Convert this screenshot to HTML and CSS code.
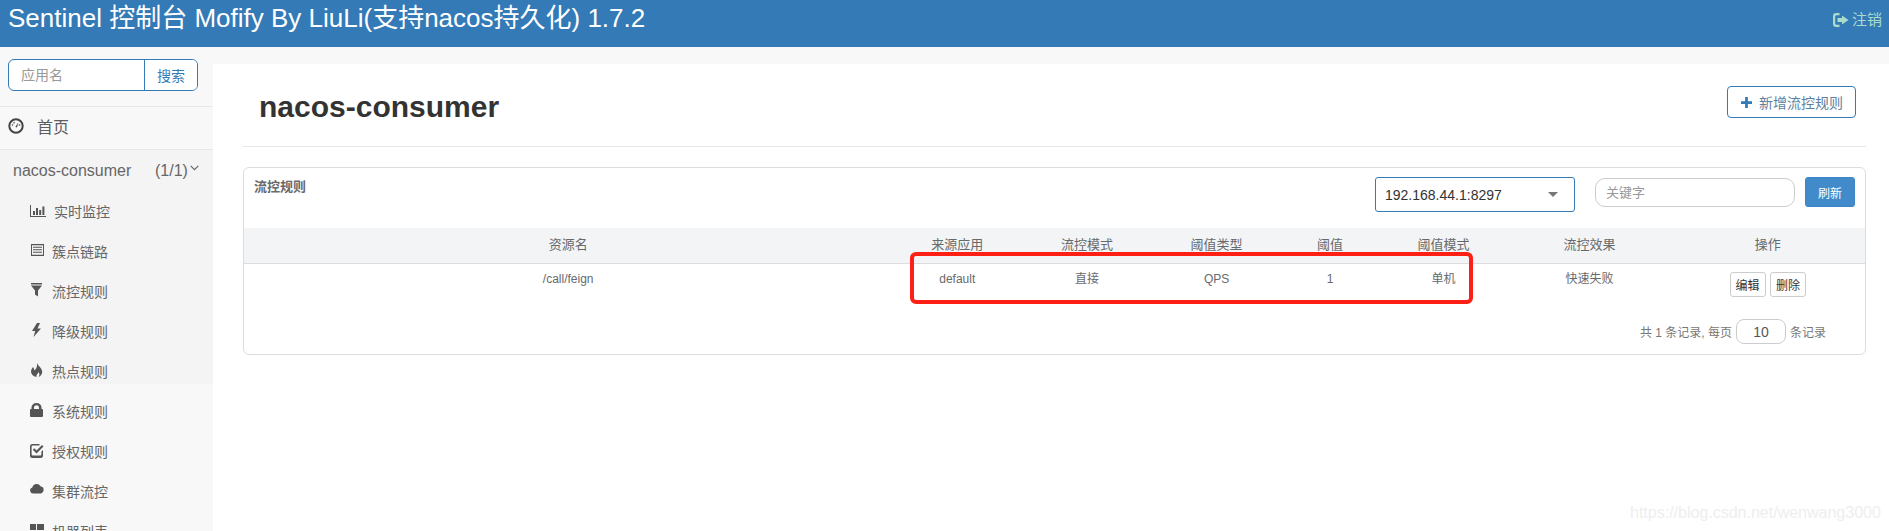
FILE: index.html
```html
<!DOCTYPE html>
<html lang="en">

<head>
    <meta charset="UTF-8">
    <meta name="viewport" content="width=device-width, initial-scale=1.0">
    <title>Sentinel 控制台</title>
    <link rel="stylesheet" href="styles.css">
</head>

<body>
    <header class="navbar">
        <div class="brand">Sentinel 控制台 Mofify By LiuLi(支持nacos持久化) 1.7.2</div>
        <a class="logout" href="#">
            <svg class="logout-icon" viewBox="0 0 16 14"><path d="M6.500 0H3.200A3.200 3.200 0 0 0 0 3.200v7.600A3.200 3.200 0 0 0 3.200 14H6.500v-2.200H3.600A1.400 1.400 0 0 1 2.200 10.400V3.600A1.400 1.400 0 0 1 3.600 2.200H6.500zM9 2.500V5H4.500V9H9V11.500L15.500 7z"/></svg>
            注销
        </a>
    </header>

    <div class="layout">
        <aside class="sidebar">
            <div class="search-box">
                <div class="search-group">
                    <input class="search-input" type="text" placeholder="应用名">
                    <button class="search-btn">搜索</button>
                </div>
            </div>
            <a class="home-link" href="#">
                <svg class="home-icon" viewBox="0 0 16 16"><circle cx="8" cy="8" r="6.700" fill="none" stroke="currentColor" stroke-width="2"/><path d="M7.400 8.800 10.400 4.400 8.900 9.500z"/><circle cx="4.600" cy="7" r=".8"/><circle cx="6" cy="4.700" r=".8"/><circle cx="11.500" cy="7" r=".8"/></svg>
                <span>首页</span>
            </a>
            <div class="app-block">
                <div class="app-title">
                    <span class="app-name">nacos-consumer</span>
                    <span class="app-count">(1/1)</span>
                    <svg class="chevron" viewBox="0 0 9 6"><path d="M.7.8 4.500 4.600 8.300.8" fill="none" stroke="currentColor" stroke-width="1.200"/></svg>
                </div>
                <ul class="sub-menu">
                    <li>
                        <svg class="menu-icon menu-icon-wide" viewBox="0 0 16 16"><path d="M0 2h1v11h15v1H0zM3 8h2v4H3zM6 5h2v7H6zM9.200 7h2v5h-2zM12.400 3.500h2V12h-2z"/></svg>
                        <span>实时监控</span>
                    </li>
                    <li>
                        <svg class="menu-icon" viewBox="0 0 16 16"><path fill-rule="evenodd" d="M1 1h13v12H1zM2 2.200v9.600h11V2.200z"/><path d="M3 3.800h9v1H3zM3 6.300h9v1H3zM3 8.800h9v1H3z"/></svg>
                        <span>簇点链路</span>
                    </li>
                    <li>
                        <svg class="menu-icon" viewBox="0 0 16 16"><path d="M1 0h11v1.500H1zM1 2.500h11L8 7.500v6l-3-2v-4z"/></svg>
                        <span>流控规则</span>
                    </li>
                    <li>
                        <svg class="menu-icon" viewBox="0 0 16 16"><path d="M7 0 2 8h3.200L3.500 14 11 5.500H7.500L10 0z"/></svg>
                        <span>降级规则</span>
                    </li>
                    <li>
                        <svg class="menu-icon" viewBox="0 0 16 16"><path d="M7 0c.8 2.500 4 4 5 7.500.8 3-1 5.500-3.500 6.500 1.200-1.500 1.300-3.500 0-5C8 11 6 11.500 6.500 14 3 13.200 1 11 1 8.500 1 6.500 2.200 5.500 3 4c1 1.500 1.300 2.500 1.500 3.500C6.500 5.500 7.500 3 7 0z"/></svg>
                        <span>热点规则</span>
                    </li>
                    <li>
                        <svg class="menu-icon" viewBox="0 0 16 16"><path fill-rule="evenodd" d="M1.500 6V4.500a5 4.500 0 0 1 10 0V6h.5a1 1 0 0 1 1 1v6a1 1 0 0 1-1 1H1a1 1 0 0 1-1-1V7a1 1 0 0 1 1-1zM4 6h5V4.500a2.500 2.300 0 0 0-5 0z"/></svg>
                        <span>系统规则</span>
                    </li>
                    <li>
                        <svg class="menu-icon" viewBox="0 0 16 16"><path d="M2.500 1h7v1.600H2.800a1.200 1.200 0 0 0-1.200 1.200v7.400a1.200 1.200 0 0 0 1.200 1.200h7.400a1.200 1.200 0 0 0 1.200-1.200V8.500L13 6.900v5.600a2.500 2.500 0 0 1-2.500 2.500h-8A2.500 2.500 0 0 1 0 12.500v-9A2.500 2.500 0 0 1 2.500 1z"/><path d="M6.500 10.500 2.800 6.800 4.300 5.300 6.500 7.500 12 2l1.500 1.500z"/></svg>
                        <span>授权规则</span>
                    </li>
                    <li>
                        <svg class="menu-icon" viewBox="0 0 16 16"><path d="M3 10.500A3 3 0 0 1 2.300 4.600 4.400 4.400 0 0 1 10.500 3.300 3.700 3.700 0 0 1 11 10.500z"/></svg>
                        <span>集群流控</span>
                    </li>
                    <li>
                        <svg class="menu-icon" viewBox="0 0 16 16"><path d="M0 1h6v6H0zM7 1h7v6H7zM0 8h6v6H0zM7 8h7v6H7z"/></svg>
                        <span>机器列表</span>
                    </li>
                </ul>
            </div>
        </aside>

        <main class="content">
            <div class="page-head">
                <h1 class="page-title">nacos-consumer</h1>
                <button class="add-btn">
                    <svg class="plus-icon" viewBox="0 0 12 12"><path d="M4.500 0h3v4.500H12v3H7.500V12h-3V7.500H0v-3h4.500z"/></svg>
                    新增流控规则
                </button>
            </div>

            <section class="panel">
                <div class="panel-bar">
                    <div class="panel-title">流控规则</div>
                    <div class="host-select">
                        <span>192.168.44.1:8297</span>
                        <i class="caret"></i>
                    </div>
                    <input class="keyword" type="text" placeholder="关键字">
                    <button class="refresh-btn">刷新</button>
                </div>

                <table class="rule-table">
                    <colgroup>
                        <col class="col-40">
                        <col class="col-8">
                        <col class="col-8">
                        <col class="col-8">
                        <col class="col-6">
                        <col class="col-8">
                        <col class="col-10">
                        <col class="col-12">
                    </colgroup>
                    <thead>
                        <tr>
                            <th>资源名</th>
                            <th>来源应用</th>
                            <th>流控模式</th>
                            <th>阈值类型</th>
                            <th>阈值</th>
                            <th>阈值模式</th>
                            <th>流控效果</th>
                            <th>操作</th>
                        </tr>
                    </thead>
                    <tbody>
                        <tr>
                            <td>/call/feign</td>
                            <td>default</td>
                            <td>直接</td>
                            <td>QPS</td>
                            <td>1</td>
                            <td>单机</td>
                            <td>快速失败</td>
                            <td>
                                <button class="row-btn">编辑</button>
                                <button class="row-btn">删除</button>
                            </td>
                        </tr>
                    </tbody>
                </table>

                <div class="pager">
                    <span>共 1 条记录, 每页</span>
                    <input class="page-size" type="text" value="10">
                    <span>条记录</span>
                </div>
            </section>
        </main>
    </div>

    <div class="highlight"></div>
    <div class="watermark">https://blog.csdn.net/wenwang3000</div>
</body>

</html>
```

FILE: styles.css
```css
/* Reset */
* {
    margin: 0;
    padding: 0;
    box-sizing: border-box;
}

html,
body {
    height: 100%;
    overflow: hidden;
}

body {
    position: relative;
    font-family: "Liberation Sans", "Noto Sans CJK SC", sans-serif;
    color: #676a6c;
    background-color: #fff;
}

a {
    color: inherit;
    text-decoration: none;
}

button,
input {
    font-family: inherit;
}

.navbar {
    height: 47px;
    background: #337ab7;
    color: #fff;
    display: flex;
    justify-content: space-between;
    align-items: flex-start;
    padding: 0 7px 0 8px;
}

.brand {
    font-size: 26px;
    line-height: 36px;
}

.logout {
    display: flex;
    align-items: center;
    gap: 3px;
    color: #a9dccb;
    font-size: 15px;
    line-height: 40px;
}

.logout-icon {
    width: 16px;
    height: 14px;
    fill: currentColor;
}

.layout {
    display: flex;
    height: 484px;
}

.sidebar {
    width: 213px;
    flex-shrink: 0;
    background: #f8f8f8;
}

.search-box {
    height: 60px;
    padding: 12px 8px 0;
    border-bottom: 1px solid #e7e7e7;
}

.search-group {
    display: flex;
    width: 190px;
    height: 32px;
    border: 1px solid #337ab7;
    border-radius: 6px;
    background: #fff;
    overflow: hidden;
}

.search-input {
    width: 135px;
    border: 0;
    outline: none;
    padding-left: 12px;
    font-size: 14px;
    background: transparent;
}

.search-input::placeholder,
.keyword::placeholder {
    color: #999;
}

.search-btn {
    flex: 1;
    border: 0;
    border-left: 1px solid #337ab7;
    background: #fff;
    color: #337ab7;
    font-size: 14px;
}

.home-link {
    display: flex;
    align-items: center;
    gap: 13px;
    height: 43px;
    padding: 0 0 4px 8px;
    font-size: 16px;
    color: #5e5e5e;
    border-bottom: 1px solid #e7e7e7;
}

.home-icon {
    width: 16px;
    height: 16px;
    fill: #444;
    color: #444;
}

.app-block {
    height: 234px;
    background: #f4f4f5;
}

.app-title {
    display: flex;
    align-items: center;
    height: 41px;
    padding-left: 13px;
    font-size: 16px;
    color: #666;
}

.app-name {
    width: 142px;
}

.chevron {
    width: 9px;
    height: 6px;
    margin: 0 0 6px 2px;
}

.sub-menu {
    list-style: none;
}

.sub-menu li {
    display: flex;
    align-items: center;
    height: 40px;
    padding-left: 30px;
    font-size: 14px;
    color: #666;
}

.menu-icon {
    width: 16px;
    height: 16px;
    margin-right: 6px;
    fill: #555;
}

.menu-icon-wide {
    margin-right: 8px;
}

/* grey strip under the navbar, white sheet below it */
.content {
    flex: 1;
    padding: 17px 23px 0 30px;
    background: linear-gradient(#f8f8f8 17px, #fff 17px);
}

.page-head {
    display: flex;
    justify-content: space-between;
    align-items: flex-start;
    height: 83px;
    margin: 0 0 20px;
    padding: 22px 10px 0 16px;
    border-bottom: 1px solid #e7e7e7;
}

.page-title {
    font-size: 30px;
    line-height: 42px;
    color: #333;
}

.add-btn {
    display: flex;
    align-items: center;
    gap: 7px;
    width: 129px;
    height: 32px;
    padding-left: 13px;
    border: 1px solid #337ab7;
    border-radius: 4px;
    background: #fff;
    color: #5c7f9f;
    font-size: 14px;
}

.plus-icon {
    width: 11px;
    height: 11px;
    fill: #337ab7;
}

.panel {
    height: 188px;
    border: 1px solid #ddd;
    border-radius: 6px;
}

.panel-bar {
    display: flex;
    align-items: flex-start;
    height: 60px;
    padding: 9px 10px 0;
}

.panel-title {
    font-size: 13px;
    font-weight: bold;
    line-height: 20px;
    margin-right: auto;
}

.host-select {
    display: flex;
    justify-content: space-between;
    align-items: center;
    width: 200px;
    height: 35px;
    margin-right: 20px;
    padding: 0 16px 0 9px;
    border: 1px solid #337ab7;
    border-radius: 3px;
    font-size: 14px;
    color: #333;
}

.caret {
    width: 0;
    height: 0;
    border-left: 5px solid transparent;
    border-right: 5px solid transparent;
    border-top: 5px solid #777;
}

.keyword {
    width: 200px;
    height: 29px;
    margin: 1px 10px 0 0;
    padding-left: 10px;
    border: 1px solid #ccc;
    border-radius: 10px;
    outline: none;
    font-size: 13px;
}

.refresh-btn {
    width: 50px;
    height: 30px;
    border: 1px solid #3d85c6;
    border-radius: 3px;
    background: #428bca;
    color: #fff;
    font-size: 12px;
}

.rule-table {
    width: 100%;
    table-layout: fixed;
    border-collapse: collapse;
    text-align: center;
}

.col-40 { width: 40%; }
.col-12 { width: 12%; }
.col-10 { width: 10%; }
.col-8 { width: 8%; }
.col-6 { width: 6%; }

.rule-table th {
    height: 35px;
    padding-bottom: 3px;
    background: #f3f4f6;
    border-bottom: 1px solid #ddd;
    font-size: 13px;
    font-weight: normal;
}

.rule-table td {
    padding-top: 7px;
    height: 42px;
    vertical-align: top;
    font-size: 12px;
    line-height: 17px;
}

.rule-table td:last-child {
    padding-top: 8px;
}

.row-btn {
    width: 36px;
    height: 25px;
    border: 1px solid #ccc;
    border-radius: 3px;
    background: #fff;
    color: #333;
    font-size: 12px;
}

.row-btn + .row-btn {
    margin-left: 1px;
}

.pager {
    display: flex;
    justify-content: flex-end;
    align-items: center;
    gap: 4px;
    padding-right: 39px;
    margin-top: 14px;
    font-size: 12px;
    color: #777;
}

.page-size {
    width: 50px;
    height: 25px;
    border: 1px solid #ccc;
    border-radius: 8px;
    text-align: center;
    font-size: 14px;
    color: #555;
    outline: none;
}

/* red marker drawn over the screenshot */
.highlight {
    position: absolute;
    left: 910px;
    top: 252px;
    width: 563px;
    height: 52px;
    border: 4px solid #ff2015;
    border-radius: 6px;
}

.watermark {
    position: absolute;
    left: 1630px;
    top: 504px;
    font-size: 16px;
    color: #eee;
}
```
